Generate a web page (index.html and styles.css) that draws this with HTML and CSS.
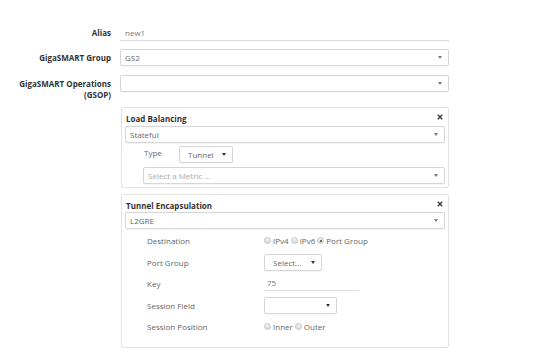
FILE: index.html
```html
<!DOCTYPE html>
<html>
<head>
<meta charset="utf-8">
<link rel="stylesheet" href="styles.css">
</head>
<body>
<div class="form">
  <div class="row r-alias">
    <div class="lbl">Alias</div>
    <div class="ctl"><div class="uline">new1</div></div>
  </div>
  <div class="row r-group">
    <div class="lbl">GigaSMART Group</div>
    <div class="ctl"><div class="sel"><span>GS2</span><i class="caret"></i></div></div>
  </div>
  <div class="row r-gsop">
    <div class="lbl lbl2">GigaSMART Operations<br>(GSOP)</div>
    <div class="ctl"><div class="sel"><span></span><i class="caret"></i></div></div>
  </div>

  <div class="panels">
    <div class="panel p-lb">
      <div class="ptitle"><span>Load Balancing</span>
        <svg class="close" width="6" height="6" viewBox="0 0 6 6"><path d="M0.8 0.8L5.2 5.2M5.2 0.8L0.8 5.2" stroke="#444" stroke-width="1.6"/></svg>
      </div>
      <div class="sel"><span>Stateful</span><i class="caret"></i></div>
      <div class="typerow">
        <span class="sublbl type-lbl">Type</span>
        <div class="sel small tunnel"><span>Tunnel</span><i class="caret dark"></i></div>
      </div>
      <div class="sel metric"><span class="ph">Select a Metric ...</span><i class="caret"></i></div>
    </div>

    <div class="panel p-te">
      <div class="ptitle"><span>Tunnel Encapsulation</span>
        <svg class="close" width="6" height="6" viewBox="0 0 6 6"><path d="M0.8 0.8L5.2 5.2M5.2 0.8L0.8 5.2" stroke="#444" stroke-width="1.6"/></svg>
      </div>
      <div class="sel"><span>L2GRE</span><i class="caret"></i></div>
      <div class="frow">
        <span class="sublbl">Destination</span>
        <div class="radios">
          <span class="radio"></span><span class="rtxt">IPv4</span>
          <span class="radio"></span><span class="rtxt">IPv6</span>
          <span class="radio on"></span><span class="rtxt">Port Group</span>
        </div>
      </div>
      <div class="frow">
        <span class="sublbl">Port Group</span>
        <div class="sel small pg"><span>Select...</span><i class="caret dark"></i></div>
      </div>
      <div class="frow">
        <span class="sublbl">Key</span>
        <div class="uline key">75</div>
      </div>
      <div class="frow">
        <span class="sublbl">Session Field</span>
        <div class="sel small sf"><span></span><i class="caret dark"></i></div>
      </div>
      <div class="frow">
        <span class="sublbl">Session Position</span>
        <div class="radios">
          <span class="radio"></span><span class="rtxt">Inner</span>
          <span class="radio"></span><span class="rtxt">Outer</span>
        </div>
      </div>
    </div>
  </div>
</div>
</body>
</html>
```

FILE: styles.css
```css
html, body {
  margin: 0;
  padding: 0;
  background: #fff;
}
body {
  font-family: "Open Sans", "Noto Sans", sans-serif;
  font-size: 8px;
  color: #555;
}
.form {
  padding-top: 24px;
  width: 541px;
}
.row {
  display: flex;
  align-items: center;
}
.lbl {
  width: 111px;
  text-align: right;
  font-weight: 700;
  color: #333;
  line-height: 11px;
  flex: none;
}
.ctl {
  margin-left: 9px;
  width: 329px;
}
.r-group { margin-top: 8px; }
.r-gsop { margin-top: 9px; align-items: flex-start; }
.lbl2 { padding-top: 3px; }
.uline {
  height: 16px;
  border-bottom: 1px solid #ddd;
  display: flex;
  align-items: center;
  padding-left: 5px;
  color: #777;
}
.sel {
  box-sizing: border-box;
  height: 17px;
  border: 1px solid #d6d6d6;
  border-radius: 2px;
  display: flex;
  align-items: center;
  justify-content: space-between;
  padding: 0 6px 0 4px;
  color: #666;
  background: #fff;
  box-shadow: 0 1px 1px rgba(0,0,0,0.04);
}
.caret {
  width: 0;
  height: 0;
  border-left: 2.5px solid transparent;
  border-right: 2.5px solid transparent;
  border-top: 3px solid #777;
}
.caret.dark { border-top-color: #333; }
.ph { color: #aaa; }
.panels {
  margin-left: 121px;
  width: 328px;
  margin-top: 7px;
}
.panel {
  box-sizing: border-box;
  border: 1px solid #e3e3e3;
  border-radius: 2px;
  padding: 3px 3px 6px 3px;
}
.ptitle {
  display: flex;
  justify-content: space-between;
  align-items: center;
  height: 15px;
  font-weight: 700;
  color: #333;
  padding: 0 2px 0 1px;
}
.close { margin-top: -3px; }
.p-lb { height: 81px; }
.typerow {
  display: flex;
  align-items: center;
  margin-top: 3px;
  height: 17px;
}
.type-lbl {
  margin-left: 19px;
  width: 35px;
  margin-top: -4px;
}
.sel.small {
  padding: 0 6px 0 8px;
}
.tunnel { width: 54px; }
.metric {
  margin-left: 18px;
  margin-top: 4px;
}
.p-te {
  margin-top: 6px;
  height: 154px;
}
.p-te .ptitle { height: 14px; }
.frow {
  display: flex;
  align-items: center;
  height: 21.5px;
}
.p-te .sel + .frow { margin-top: 1px; }
.sublbl {
  color: #666;
}
.frow .sublbl {
  width: 117px;
  margin-left: 22px;
  flex: none;
}
.radios {
  display: flex;
  align-items: center;
  color: #666;
}
.radio {
  box-sizing: border-box;
  width: 7px;
  height: 7px;
  border-radius: 50%;
  border: 1px solid #c4c4c4;
  background: linear-gradient(#f4f4f4, #d8d8d8);
  margin-right: 2px;
  position: relative;
}
.radio.on::after {
  content: "";
  position: absolute;
  left: 1.5px;
  top: 1.5px;
  width: 2px;
  height: 2px;
  border-radius: 50%;
  background: #444;
}
.rtxt { margin-right: 2px; }
.pg { width: 58px; }
.key {
  width: 92px;
  padding-left: 3px;
  height: 14px;
  margin-top: -1px;
}
.sf { width: 73px; }
```
